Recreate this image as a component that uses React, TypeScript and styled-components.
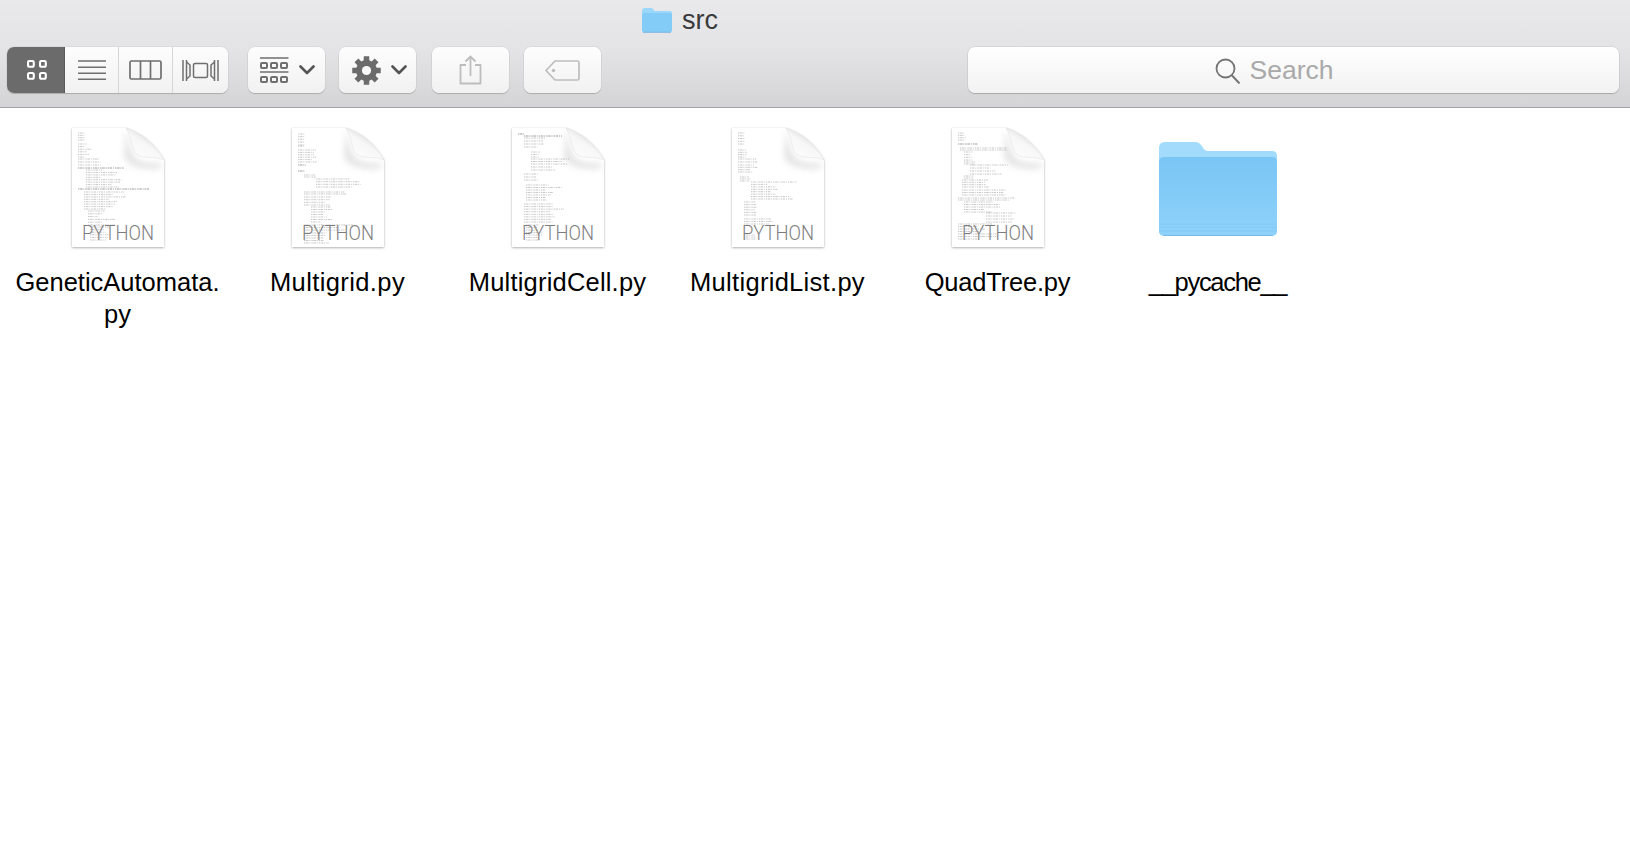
import React from "react";
import styled, { createGlobalStyle } from "styled-components";

const Global = createGlobalStyle`
  html, body { margin: 0; padding: 0; background: #fff; height: 100%; overflow: hidden; }
  body { font-family: "Liberation Sans", Arial, sans-serif; }
`;

const Page = styled.div`
  width: 1630px;
  height: 850px;
  display: flex;
  flex-direction: column;
  background: #fff;
`;

const TitleBar = styled.header`
  height: 108px;
  box-sizing: border-box;
  background: linear-gradient(#e9e9eb 0%, #e4e4e6 45%, #d4d4d6 100%);
  border-bottom: 1.5px solid #a4a4a4;
  display: flex;
  flex-direction: column;
`;

const TitleRow = styled.div`
  height: 47px;
  padding: 0 270px 6px 0;
  box-sizing: border-box;
  display: flex;
  justify-content: center;
  align-items: center;
  gap: 10px;
  color: #3a3a3c;
  font-size: 27px;
  line-height: 41px;
`;

const Toolbar = styled.div`
  height: 46px;
  display: flex;
  align-items: stretch;
  padding: 0 11px 0 7px;
`;

const Segmented = styled.div`
  width: 221px;
  display: flex;
  border-radius: 7px;
  overflow: hidden;
  box-shadow: 0 1px 1px #acacac, 0 0 0 0.5px #cfcfcf;
  background: linear-gradient(#fdfdfd, #f1f1f1);
`;

const Segment = styled.div<{ $active?: boolean; $w: number }>`
  width: ${(p) => p.$w}px;
  display: flex;
  align-items: center;
  justify-content: center;
  box-sizing: border-box;
  padding-left: ${(p) => (p.$active ? 3 : 0)}px;
  background: ${(p) => (p.$active ? "#6b6b6b" : "transparent")};
  border-right: ${(p) => (p.$active ? "1px solid #5a5a5a" : "1px solid #d6d6d6")};
  &:last-child { border-right: none; }
`;

const ToolButton = styled.div<{ $left: number; $gap?: number; $pad?: number }>`
  width: 77px;
  margin-left: ${(p) => p.$left}px;
  display: flex;
  align-items: center;
  justify-content: center;
  gap: ${(p) => p.$gap ?? 0}px;
  padding-left: ${(p) => p.$pad ?? 0}px;
  box-sizing: border-box;
  border-radius: 7px;
  background: linear-gradient(#fdfdfd, #f1f1f1);
  box-shadow: 0 1px 1px #acacac, 0 0 0 0.5px #cfcfcf;
`;

const SearchField = styled.div`
  width: 651px;
  margin-left: auto;
  display: flex;
  align-items: center;
  justify-content: center;
  gap: 9px;
  padding: 1px 39px 0 0;
  box-sizing: border-box;
  border-radius: 7px;
  background: linear-gradient(#ffffff, #f2f2f2);
  box-shadow: 0 1px 1px #a8a8a8, 0 0 0 0.5px #c8c8c8;
  color: #a9a9a9;
  font-size: 26.5px;
`;

const Grid = styled.main`
  display: flex;
  align-items: flex-start;
  padding: 19px 0 0 7.5px;
`;

const Item = styled.div`
  width: 220px;
  display: flex;
  flex-direction: column;
  align-items: center;
`;

const IconSlot = styled.div`
  width: 130px;
  height: 120px;
  display: flex;
  justify-content: center;
`;

const Label = styled.div<{ $tracking: number }>`
  margin-top: 19px;
  width: 214px;
  text-align: center;
  white-space: pre-line;
  color: #000;
  font-size: 25.5px;
  line-height: 32px;
  letter-spacing: ${(p) => p.$tracking}px;
`;

const GridIcon = () => (
  <svg width="20" height="20" viewBox="0 0 20 20" fill="none" stroke="#fff" strokeWidth="2.1">
    <rect x="1" y="1" width="5.8" height="5.8" rx="1.5" />
    <rect x="13" y="1" width="5.8" height="5.8" rx="1.5" />
    <rect x="1" y="13" width="5.8" height="5.8" rx="1.5" />
    <rect x="13" y="13" width="5.8" height="5.8" rx="1.5" />
  </svg>
);

const ListIcon = () => (
  <svg width="28" height="20" viewBox="0 0 28 20" stroke="#6f6f6f" strokeWidth="1.4">
    <path d="M0 1h28M0 7.2h28M0 13.2h28M0 19.2h28" />
  </svg>
);

const ColumnsIcon = () => (
  <svg width="33" height="20" viewBox="0 0 33 20" fill="none" stroke="#6f6f6f" strokeWidth="1.7">
    <rect x="1" y="1" width="31" height="18" rx="1.5" />
    <path d="M11.5 1v18M21.5 1v18" />
  </svg>
);

const CoverIcon = () => (
  <svg width="37" height="21" viewBox="0 0 37 21" fill="none" stroke="#6f6f6f" strokeWidth="1.5">
    <path d="M1 0v21M4.5 0v21M36 0v21M32.5 0v21" />
    <rect x="11.5" y="3.5" width="14" height="14" rx="1.5" />
    <path d="M4.5 2 8 5v11l-3.5 3M32.5 2 29 5v11l3.5 3" />
  </svg>
);

const GroupIcon = () => (
  <svg width="29" height="27" viewBox="0 0 29 27" fill="none" stroke="#6f6f6f">
    <path d="M0 1h28.5M0 15h28.5" strokeWidth="1.7" />
    <g strokeWidth="2">
      <rect x="1" y="6" width="6" height="5" rx="1" />
      <rect x="11" y="6" width="6" height="5" rx="1" />
      <rect x="21" y="6" width="6" height="5" rx="1" />
      <rect x="1" y="20" width="6" height="5" rx="1" />
      <rect x="11" y="20" width="6" height="5" rx="1" />
      <rect x="21" y="20" width="6" height="5" rx="1" />
    </g>
  </svg>
);

const Chevron = () => (
  <svg width="16" height="10" viewBox="0 0 16 10" fill="none" stroke="#545454" strokeWidth="2.6" strokeLinecap="round" strokeLinejoin="round">
    <path d="M1.5 1.5 8 8l6.5-6.5" />
  </svg>
);

const gearPath = (() => {
  const c = 14.5;
  const teeth = 8;
  const pts: string[] = [];
  for (let i = 0; i < teeth; i++) {
    const a = (i / teeth) * Math.PI * 2;
    const step = (Math.PI * 2) / teeth;
    const p = [
      [10.5, -0.34 * step],
      [14.5, -0.24 * step],
      [14.5, 0.24 * step],
      [10.5, 0.34 * step],
    ];
    p.forEach(([r, d]) => {
      const x = c + r * Math.sin(a + d);
      const y = c - r * Math.cos(a + d);
      pts.push(`${x.toFixed(2)} ${y.toFixed(2)}`);
    });
  }
  return `M${pts.join("L")}Z`;
})();

const GearIcon = () => (
  <svg width="29" height="29" viewBox="0 0 29 29">
    <path d={gearPath} fill="#6b6b6b" />
    <circle cx="14.5" cy="14.5" r="4.6" fill="#f8f8f8" />
  </svg>
);

const ShareIcon = () => (
  <svg width="23" height="30" viewBox="0 0 23 30" fill="none" stroke="#bdbdbd" strokeWidth="1.8">
    <path d="M7 10H1.5v18.5h20V10H16" strokeLinejoin="round" />
    <path d="M11.5 21V1.5M6.5 6.5l5-5 5 5" />
  </svg>
);

const TagIcon = () => (
  <svg width="35" height="21" viewBox="0 0 35 21" fill="none" stroke="#bdbdbd" strokeWidth="1.7">
    <path d="M10 1h22.5a1.5 1.5 0 0 1 1.5 1.5v16a1.5 1.5 0 0 1-1.5 1.5H10L1 10.5Z" strokeLinejoin="round" />
    <circle cx="8.5" cy="10.5" r="1.7" fill="#bdbdbd" stroke="none" />
  </svg>
);

const SearchIcon = () => (
  <svg width="26" height="26" viewBox="0 0 26 26" fill="none" stroke="#747474" strokeWidth="1.8">
    <circle cx="10.5" cy="10.5" r="9" />
    <path d="M17 17.5l7.5 8" strokeWidth="2" />
  </svg>
);

/* one block of code lines in the thumbnail: first y, last y, x, narrowest and widest line */
type Block = [number, number, number, number, number];

const hash = (n: number) => {
  const v = Math.sin(n * 127.1) * 43758.5453;
  return v - Math.floor(v);
};

const blockPath = (blocks: Block[], seed: number) =>
  blocks
    .map(([y0, y1, x, min, max], b) => {
      const n = Math.max(1, Math.round((y1 - y0) / 2.6));
      return Array.from({ length: n + 1 }, (_, i) => {
        const y = y0 + ((y1 - y0) * i) / n;
        const w = min + (max - min) * hash(seed * 17 + b * 5 + i);
        return `M${x} ${y.toFixed(1)}h${Math.min(w, 90 - x).toFixed(1)}`;
      }).join("");
    })
    .join("");

const FileIcon = ({ seed, blocks }: { seed: number; blocks: Block[] }) => (
  <svg width="104" height="126" viewBox="0 0 104 126">
    <defs>
      <linearGradient id={`flap${seed}`} x1="0.2" y1="0.9" x2="0.75" y2="0.2">
        <stop offset="0" stopColor="#fdfdfd" />
        <stop offset="0.55" stopColor="#f7f7f7" />
        <stop offset="1" stopColor="#d6d6d6" />
      </linearGradient>
      <filter id={`page${seed}`} x="-10%" y="-10%" width="120%" height="120%">
        <feDropShadow dx="0" dy="0.8" stdDeviation="0.9" floodColor="#777" floodOpacity="0.65" />
      </filter>
      <filter id={`soft${seed}`} x="-20%" y="-20%" width="140%" height="140%">
        <feGaussianBlur stdDeviation="0.2" />
      </filter>
      <filter id={`shade${seed}`} x="-30%" y="-30%" width="160%" height="160%">
        <feGaussianBlur stdDeviation="3" />
      </filter>
      <clipPath id={`clip${seed}`}>
        <path d="M6 1H60C76 6 90 18 98 33V120H6Z" />
      </clipPath>
    </defs>
    <path d="M6 1H60C76 6 90 18 98 33V120H6Z" fill="#fff" filter={`url(#page${seed})`} />
    <g clipPath={`url(#clip${seed})`} opacity="0.55">
      <path d="M60 1C63 14 64 28 72 33C80 37 90 35 98 37L92 42C78 42 64 42 58 30Z" fill="#cfcfcf" filter={`url(#shade${seed})`} />
    </g>
    <path d="M60 1C66 10 65 24 72 28C78 32 90 29 98 33C90 18 76 6 60 1Z" fill={`url(#flap${seed})`} stroke="#d6d6d6" strokeWidth="0.4" />
    <path d={blockPath(blocks, seed)} stroke="#666" strokeWidth="0.5" strokeDasharray="1.4 0.7 2.4 0.9 0.9 1.1" opacity="0.75" fill="none" filter={`url(#soft${seed})`} />
    <text x="52" y="113" textAnchor="middle" fontFamily="Roboto, 'Liberation Sans', sans-serif" fontWeight="300" fontSize="19.5" textLength="72" lengthAdjust="spacingAndGlyphs" fill="#7d7d7d">
      PYTHON
    </text>
  </svg>
);

const FolderShape = styled.svg`
  margin: 14px 0 0 3px;
`;

const BigFolder = () => (
  <FolderShape width="122" height="98" viewBox="0 0 122 98">
    <defs>
      <linearGradient id="folderBody" x1="0" y1="0" x2="0" y2="1">
        <stop offset="0" stopColor="#79c5f4" />
        <stop offset="1" stopColor="#8ed2fb" />
      </linearGradient>
    </defs>
    <path d="M1 7Q1 1 7 1H37Q41 1 43 4L46 8Q47 10 51 10H114Q119 10 119 15V90Q119 95 114 95H6Q1 95 1 90Z" fill="#a2dbfc" />
    <path d="M1 21Q1 16 6 16H114Q119 16 119 21V90Q119 94 114 94H6Q1 94 1 90Z" fill="url(#folderBody)" />
    <path d="M1 83H119M1 86.5H119M1 90H119" stroke="#77bdea" strokeWidth="0.9" opacity="0.45" />
    <path d="M5 94.5H115" stroke="#6aaedc" strokeWidth="1" opacity="0.7" />
  </FolderShape>
);

const MiniFolder = () => (
  <svg width="30" height="25" viewBox="0 0 30 25">
    <path d="M0 3Q0 0 3 0H9Q10.5 0 11.5 1.5L12 3H28Q30 3 30 5V22Q30 24 28 24H2Q0 24 0 22Z" fill="#9ad7fb" />
    <path d="M0 7Q0 5 2 5H28Q30 5 30 7V22Q30 24 28 24H2Q0 24 0 22Z" fill="#82ccf7" />
    <path d="M1 24.3H29" stroke="#6aaedc" strokeWidth="0.9" />
  </svg>
);

const files: { name: string; seed: number; tracking: number; blocks: Block[] }[] = [
  {
    name: "GeneticAutomata.\npy",
    seed: 1,
    tracking: 0,
    blocks: [
      [6, 13, 12, 6, 8],
      [17, 30, 12, 6, 14],
      [32, 38, 12, 20, 26],
      [41, 41, 12, 46, 46],
      [43, 60, 20, 14, 40],
      [62, 62, 12, 72, 72],
      [65, 82, 18, 20, 46],
      [84, 98, 22, 8, 30],
      [100, 113, 24, 10, 20],
    ],
  },
  {
    name: "Multigrid.py",
    seed: 2,
    tracking: 0.4,
    blocks: [
      [7, 15, 12, 6, 7],
      [18, 19, 12, 6, 7],
      [23, 35, 12, 12, 20],
      [38, 38, 12, 8, 8],
      [44, 44, 12, 7, 7],
      [48, 50, 18, 10, 12],
      [52, 60, 30, 30, 45],
      [65, 67, 18, 40, 50],
      [70, 78, 18, 18, 28],
      [80, 95, 25, 10, 22],
      [98, 103, 18, 35, 50],
      [106, 116, 18, 18, 26],
    ],
  },
  {
    name: "MultigridCell.py",
    seed: 3,
    tracking: 0.2,
    blocks: [
      [7, 7, 12, 6, 6],
      [9, 9, 18, 38, 38],
      [11, 20, 18, 10, 25],
      [25, 30, 25, 7, 9],
      [32, 37, 25, 30, 42],
      [40, 43, 25, 20, 26],
      [47, 53, 18, 12, 16],
      [58, 73, 20, 15, 36],
      [77, 95, 18, 25, 42],
      [98, 113, 20, 10, 18],
    ],
  },
  {
    name: "MultigridList.py",
    seed: 4,
    tracking: 0.3,
    blocks: [
      [6, 17, 12, 6, 7],
      [23, 30, 12, 7, 9],
      [32, 35, 12, 16, 20],
      [38, 45, 12, 12, 20],
      [50, 54, 14, 8, 12],
      [55, 72, 25, 15, 50],
      [75, 88, 18, 10, 14],
      [92, 97, 18, 20, 32],
      [108, 112, 18, 10, 12],
    ],
  },
  {
    name: "QuadTree.py",
    seed: 5,
    tracking: -0.2,
    blocks: [
      [6, 13, 12, 6, 8],
      [17, 17, 12, 20, 20],
      [21, 23, 14, 45, 52],
      [25, 33, 18, 7, 9],
      [35, 37, 18, 10, 12],
      [38, 47, 24, 10, 50],
      [49, 51, 18, 8, 12],
      [53, 60, 16, 22, 32],
      [63, 68, 16, 40, 48],
      [71, 73, 12, 50, 60],
      [75, 85, 18, 20, 40],
      [86, 95, 40, 25, 34],
      [97, 112, 12, 8, 40],
    ],
  },
];

export default function App() {
  return (
    <Page>
      <Global />
      <TitleBar>
        <TitleRow>
          <MiniFolder />
          src
        </TitleRow>
        <Toolbar>
          <Segmented>
            <Segment $active $w={58}><GridIcon /></Segment>
            <Segment $w={54}><ListIcon /></Segment>
            <Segment $w={54}><ColumnsIcon /></Segment>
            <Segment $w={55}><CoverIcon /></Segment>
          </Segmented>
          <ToolButton $left={20} $gap={10} $pad={2}><GroupIcon /><Chevron /></ToolButton>
          <ToolButton $left={14} $gap={10} $pad={4}><GearIcon /><Chevron /></ToolButton>
          <ToolButton $left={16}><ShareIcon /></ToolButton>
          <ToolButton $left={15}><TagIcon /></ToolButton>
          <SearchField><SearchIcon />Search</SearchField>
        </Toolbar>
      </TitleBar>
      <Grid>
        {files.map((f) => (
          <Item key={f.seed}>
            <IconSlot><FileIcon seed={f.seed} blocks={f.blocks} /></IconSlot>
            <Label $tracking={f.tracking}>{f.name}</Label>
          </Item>
        ))}
        <Item>
          <IconSlot><BigFolder /></IconSlot>
          <Label $tracking={-1.3}>__pycache__</Label>
        </Item>
      </Grid>
    </Page>
  );
}
